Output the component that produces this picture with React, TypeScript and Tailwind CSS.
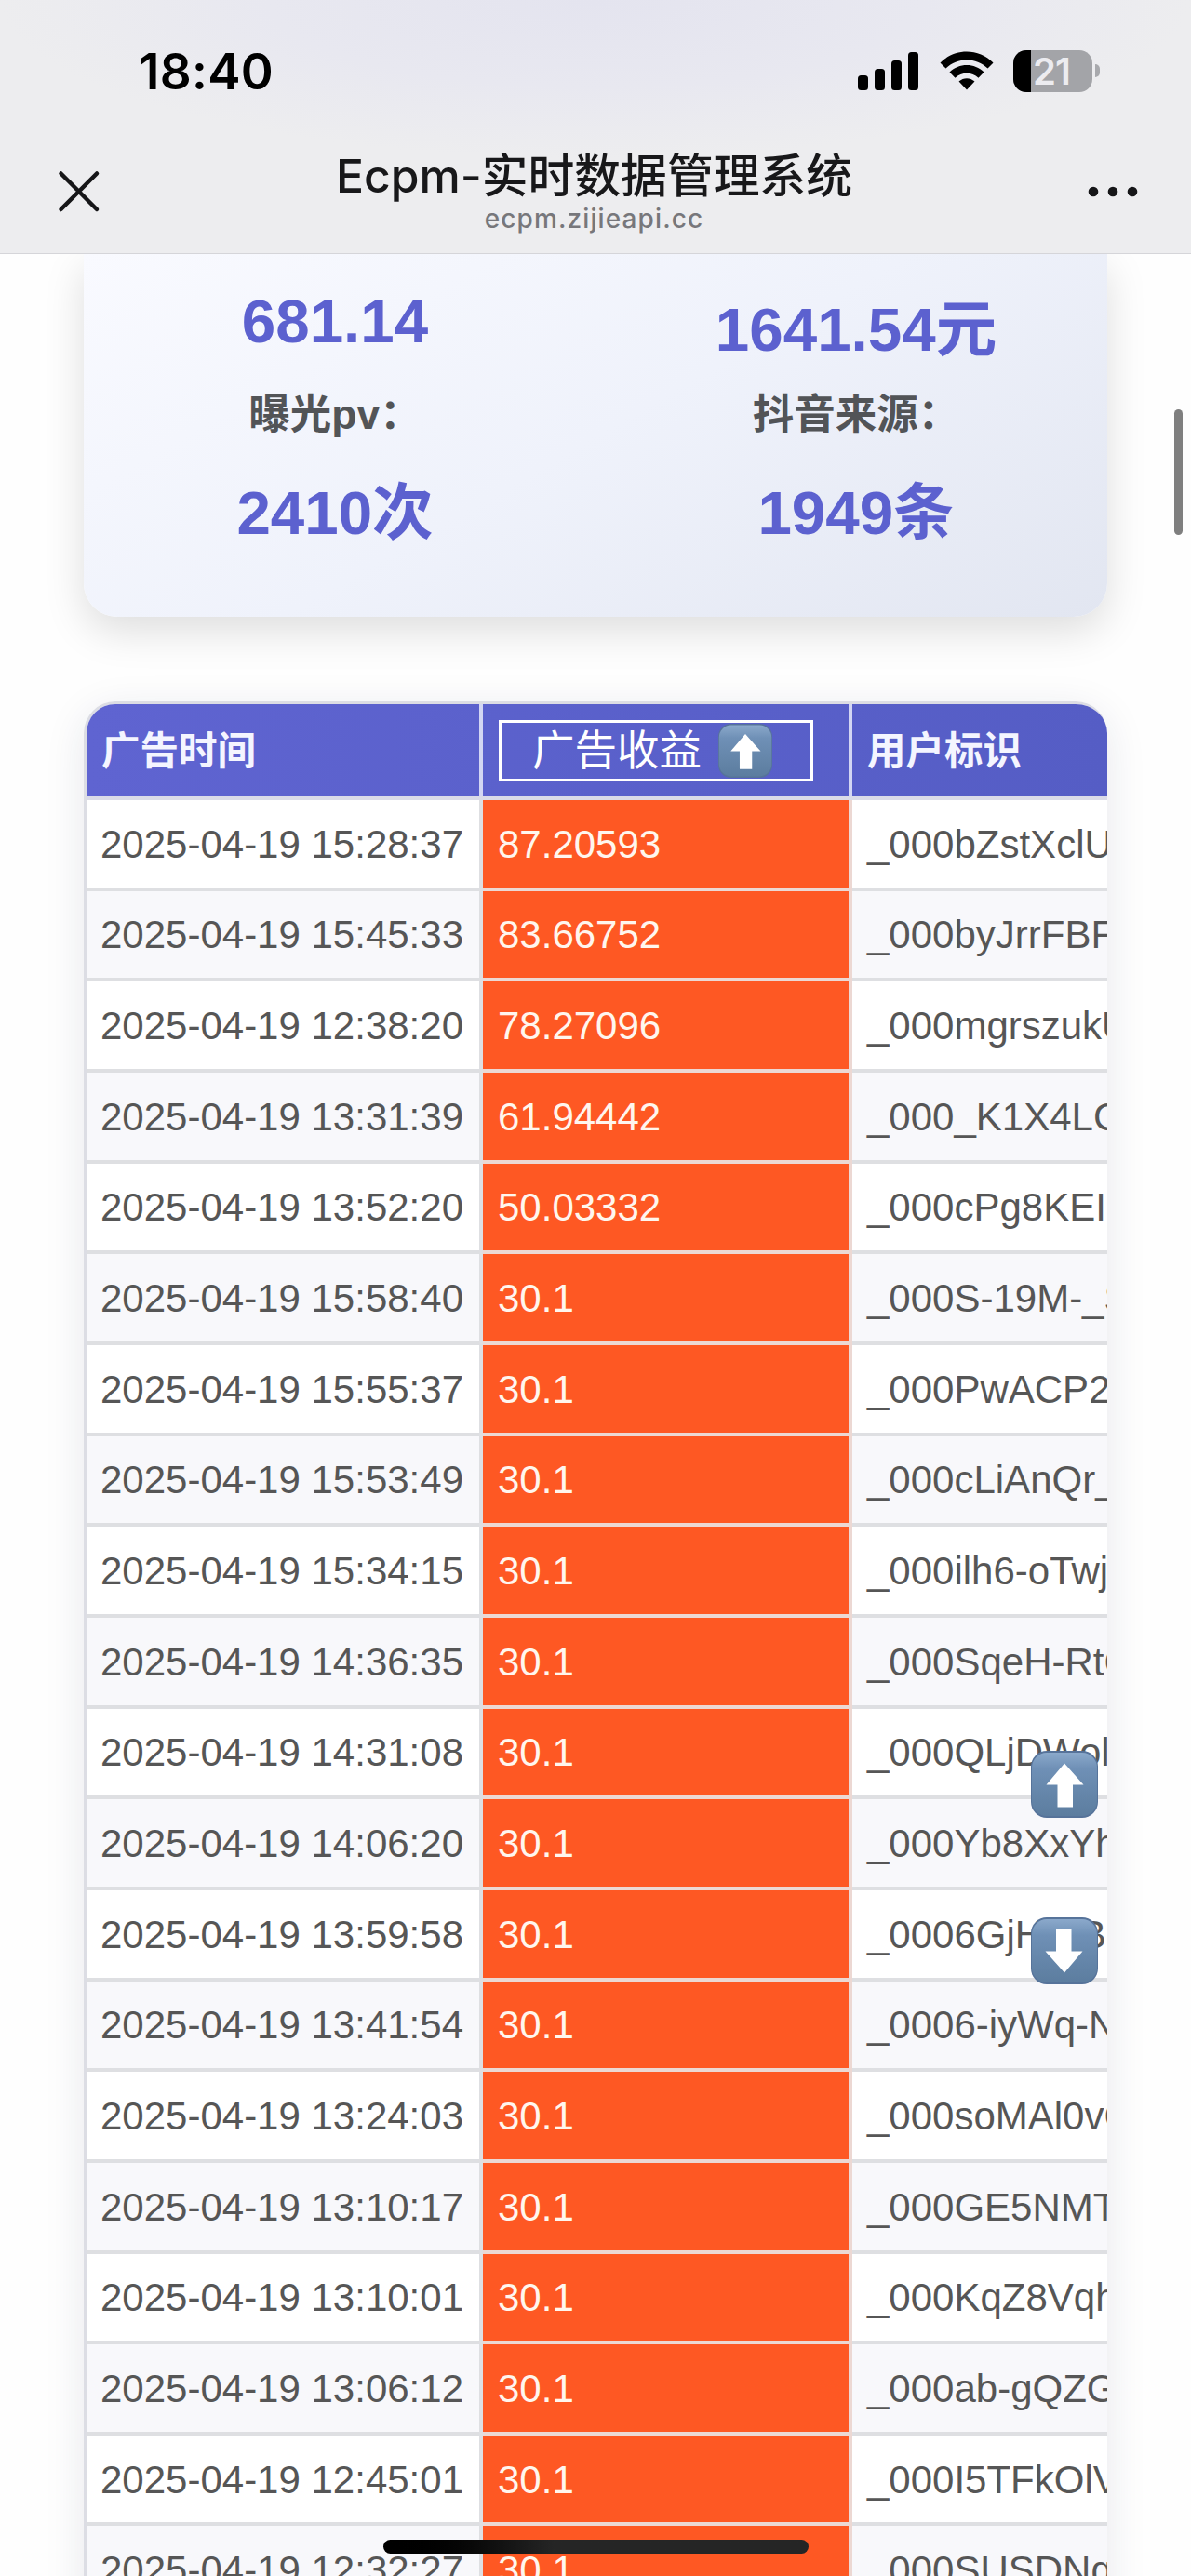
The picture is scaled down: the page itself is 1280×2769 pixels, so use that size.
import { clsx } from 'clsx';

const rows = [
  { time: '2025-04-19 15:28:37', income: '87.20593', user: '_000bZstXclU' },
  { time: '2025-04-19 15:45:33', income: '83.66752', user: '_000byJrrFBF' },
  { time: '2025-04-19 12:38:20', income: '78.27096', user: '_000mgrszukU' },
  { time: '2025-04-19 13:31:39', income: '61.94442', user: '_000_K1X4LC' },
  { time: '2025-04-19 13:52:20', income: '50.03332', user: '_000cPg8KEI' },
  { time: '2025-04-19 15:58:40', income: '30.1', user: '_000S-19M-_S' },
  { time: '2025-04-19 15:55:37', income: '30.1', user: '_000PwACP2' },
  { time: '2025-04-19 15:53:49', income: '30.1', user: '_000cLiAnQr_' },
  { time: '2025-04-19 15:34:15', income: '30.1', user: '_000ilh6-oTwj' },
  { time: '2025-04-19 14:36:35', income: '30.1', user: '_000SqeH-RtC' },
  { time: '2025-04-19 14:31:08', income: '30.1', user: '_000QLjDWol' },
  { time: '2025-04-19 14:06:20', income: '30.1', user: '_000Yb8XxYh' },
  { time: '2025-04-19 13:59:58', income: '30.1', user: '_0006GjHWB' },
  { time: '2025-04-19 13:41:54', income: '30.1', user: '_0006-iyWq-N' },
  { time: '2025-04-19 13:24:03', income: '30.1', user: '_000soMAl0vC' },
  { time: '2025-04-19 13:10:17', income: '30.1', user: '_000GE5NMT' },
  { time: '2025-04-19 13:10:01', income: '30.1', user: '_000KqZ8Vqh' },
  { time: '2025-04-19 13:06:12', income: '30.1', user: '_000ab-gQZG' },
  { time: '2025-04-19 12:45:01', income: '30.1', user: '_000I5TFkOlV' },
  { time: '2025-04-19 12:32:27', income: '30.1', user: '_000SUSDNq' },
];

function ArrowKey({ down = false, className }: { down?: boolean; className?: string }) {
  const id = down ? 'key-down' : 'key-up';
  return (
    <svg viewBox="0 0 72 72" className={className}>
      <defs>
        <linearGradient id={id} x1="0" y1="0" x2="0" y2="1">
          <stop offset="0" stopColor="#8ba9cb" />
          <stop offset="0.25" stopColor="#6f90b6" />
          <stop offset="1" stopColor="#5c7d9f" />
        </linearGradient>
      </defs>
      <rect width="72" height="72" rx="17" fill="#56739a" />
      <rect x="1" y="2" width="70" height="68" rx="16" fill={`url(#${id})`} />
      <path
        d="M36 13.5L56.5 36.5H45V60.5H28.5V36.5H16.5Z"
        fill="#fff"
        transform={down ? 'rotate(180 36 36.5)' : undefined}
      />
    </svg>
  );
}

function StatusBar() {
  return (
    <div className="flex h-[152px] items-center justify-between pl-[149px] pr-[98px]">
      <span className="pt-[2px] font-[Inter] text-[53px] leading-none font-semibold tracking-[0.3px] text-black">18:40</span>
      <div className="flex items-center">
        <svg width="66" height="42" viewBox="0 0 66 42">
          <rect x="0" y="26" width="11" height="16" rx="3.5" />
          <rect x="18" y="19" width="11" height="23" rx="3.5" />
          <rect x="36" y="10" width="11" height="32" rx="3.5" />
          <rect x="54" y="1" width="11" height="41" rx="3.5" />
        </svg>
        <svg width="58" height="42" viewBox="0 0 58 42" className="ml-[22px]">
          <path d="M0.5 12.5C16 -3.5 42 -3.5 57.5 12.5L51.5 18.5C39 6.5 19 6.5 6.5 18.5Z" />
          <path d="M10.5 22.5C20.5 12.5 37.5 12.5 47.5 22.5L41.5 28.8C34.5 22 23.5 22 16.5 28.8Z" />
          <path d="M20.5 32.5C25.5 28 32.5 28 37.5 32.5L29 41.5Z" />
        </svg>
        <div className="relative ml-[21px] h-[45px] w-[85px] overflow-hidden rounded-[14px] bg-[#a3a4a8]">
          <div className="h-full w-[19px] bg-black" />
          <span className="absolute top-[2px] left-[21px] font-[Inter] text-[40px] leading-[41px] font-semibold tracking-[-1px] text-[#ececf0]">
            21
          </span>
        </div>
        <div className="ml-[3px] h-[14px] w-[5px] rounded-r-full bg-[#a8a9ad]" />
      </div>
    </div>
  );
}

function NavBar() {
  return (
    <div className="flex h-[120px] items-start justify-between pr-[57px] pl-[62px]">
      <svg width="46" height="46" viewBox="0 0 46 46" className="mt-[31px]" stroke="#161618" strokeWidth="4.5" strokeLinecap="round">
        <path d="M3.5 3.5L42 42M42 3.5L3.5 42" />
      </svg>
      <div className="flex flex-col items-center">
        <h1 className="mt-[7px] font-[Inter,'Noto_Sans_CJK_SC',sans-serif] text-[49.8px] leading-[60px] font-medium whitespace-nowrap text-[#18181a]">
          Ecpm-实时数据管理系统
        </h1>
        <p className="mt-[-1px] font-[Inter] text-[28px] leading-[34px] font-medium tracking-[1.1px] text-[#77777b]">ecpm.zijieapi.cc</p>
      </div>
      <svg width="54" height="12" viewBox="0 0 54 12" className="mt-[48px]" fill="#161618">
        <circle cx="6" cy="6" r="5.3" />
        <circle cx="27" cy="6" r="5.3" />
        <circle cx="48" cy="6" r="5.3" />
      </svg>
    </div>
  );
}

function SummaryCard() {
  const value = 'text-[65.5px] leading-[80px] font-bold text-[#5c61cf]';
  const label = 'text-[44.5px] leading-[60px] font-bold text-[#525457]';
  return (
    <section className="mx-[90px] grid h-[390px] grid-cols-2 gap-x-[40px] rounded-b-[36px] bg-linear-[150deg] from-[#f9faff] via-[#eff2fb] to-[#e2e6f1] px-[10px] text-center shadow-[0_16px_44px_rgba(0,0,0,0.13)]">
      <div>
        <div className={clsx(value, 'mt-[33px]')}>681.14</div>
        <div className={clsx(label, 'mt-[30px]')}>曝光pv：</div>
        <div className={clsx(value, 'mt-[36px]')}>2410次</div>
      </div>
      <div>
        <div className={clsx(value, 'mt-[42px]')}>1641.54元</div>
        <div className={clsx(label, 'mt-[21px]')}>抖音来源：</div>
        <div className={clsx(value, 'mt-[36px]')}>1949条</div>
      </div>
    </section>
  );
}

function RecordTable() {
  return (
    <section className="mx-[90px] mt-[91px] overflow-hidden rounded-t-[34px] border-t-3 border-l-3 border-[#dcdde4] text-[42px] whitespace-nowrap shadow-[0_10px_44px_rgba(30,40,80,0.1)]">
      <div className="grid h-[103px] grid-cols-[426px_397px_274px] border-b-4 border-[#dadbe8] bg-linear-to-r from-[#5f64d1] to-[#555dc5] font-bold text-[#f4f5ff]">
        <div className="flex items-center border-r-4 border-[#d3d6f3] pt-[3px] pl-[16px] text-[41.5px]">广告时间</div>
        <div className="flex items-center border-r-4 border-[#d3d6f3] pl-[17px]">
          <button className="flex h-[66px] w-[338px] items-center border-3 border-white pl-[33px] text-[45.5px] leading-none font-normal text-white">
            <span className="pt-[3px]">广告收益</span>
            <ArrowKey className="ml-[18px] h-[58px] w-[58px]" />
          </button>
        </div>
        <div className="flex items-center pt-[3px] pl-[16px] text-[41.5px]">用户标识</div>
      </div>
      {rows.map((row, i) => (
        <div
          key={row.time}
          className={clsx(
            'grid h-[97.67px] grid-cols-[426px_397px_274px] text-[#565656]',
            i % 2 ? 'bg-[#f8f8fb]' : 'bg-white',
          )}
        >
          <div className="flex items-center border-r-4 border-b-4 border-[#dedfe2] pt-px pl-[15px]">{row.time}</div>
          <div className="flex items-center border-r-4 border-b-4 border-[#ecd8d3] bg-[#fe5823] pt-px pl-[16px] text-[#fff6ee]">
            {row.income}
          </div>
          <div className="flex items-center overflow-hidden border-b-4 border-[#dedfe2] pt-px pl-[16px]">{row.user}</div>
        </div>
      ))}
    </section>
  );
}

export default function App() {
  return (
    <div className="relative h-[2769px] w-[1280px] overflow-hidden bg-[#fefefe] font-['Liberation_Sans','Noto_Sans_CJK_SC',sans-serif]">
      <header className="relative z-10 h-[273px] border-b border-[#d5d5d9] bg-[#ededef] bg-[radial-gradient(ellipse_640px_170px_at_50%_0,#e4e4ef,#e8e8f0_55%,#ededef)]">
        <StatusBar />
        <NavBar />
      </header>
      <SummaryCard />
      <RecordTable />

      <ArrowKey className="absolute top-[1882px] left-[1108px] h-[72px] w-[72px]" />
      <ArrowKey down className="absolute top-[2061px] left-[1108px] h-[72px] w-[72px]" />
      <div className="absolute top-[440px] right-[9px] h-[135px] w-[9px] rounded-full bg-[#7f7f7f]" />
      <div className="absolute bottom-[24px] left-[412px] h-[15px] w-[457px] rounded-full bg-linear-to-r from-black to-[#252525] to-40%" />
    </div>
  );
}
